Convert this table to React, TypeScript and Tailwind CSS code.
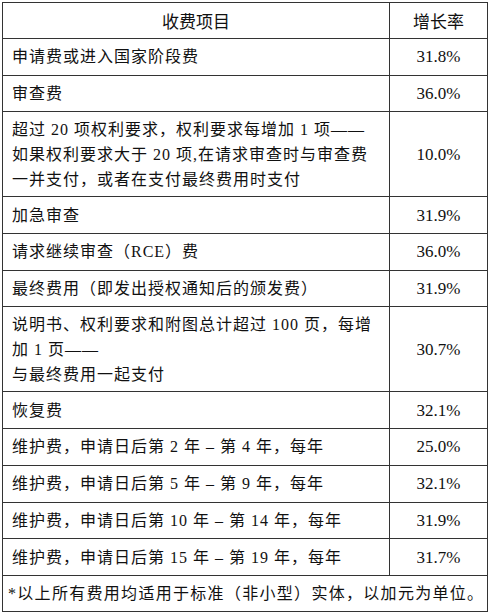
const rows: { item: React.ReactNode; rate: string; tall?: boolean }[] = [
  { item: '申请费或进入国家阶段费', rate: '31.8%' },
  { item: '审查费', rate: '36.0%' },
  {
    item: (
      <>
        超过 20 项权利要求，权利要求每增加 1 项——
        <br />
        如果权利要求大于 20 项,在请求审查时与审查费
        <br />
        一并支付，或者在支付最终费用时支付
      </>
    ),
    rate: '10.0%',
    tall: true,
  },
  { item: '加急审查', rate: '31.9%' },
  { item: '请求继续审查（RCE）费', rate: '36.0%' },
  { item: '最终费用（即发出授权通知后的颁发费）', rate: '31.9%' },
  {
    item: (
      <>
        说明书、权利要求和附图总计超过 100 页，每增
        <br />
        加 1 页——
        <br />
        与最终费用一起支付
      </>
    ),
    rate: '30.7%',
    tall: true,
  },
  { item: '恢复费', rate: '32.1%' },
  { item: '维护费，申请日后第 2 年 – 第 4 年，每年', rate: '25.0%' },
  { item: '维护费，申请日后第 5 年 – 第 9 年，每年', rate: '32.1%' },
  { item: '维护费，申请日后第 10 年 – 第 14 年，每年', rate: '31.9%' },
  { item: '维护费，申请日后第 15 年 – 第 19 年，每年', rate: '31.7%' },
];

const font = { fontFamily: '"Liberation Serif", "Noto Sans CJK SC", serif' };

export default function App() {
  return (
    <div className="min-h-[615px] w-[489px] bg-white pl-[2px] pt-[2px] text-[#111]" style={font}>
      <div className="w-[486px] border-l border-t border-[#333] text-[16px] leading-[25px]">
        {/* header */}
        <div className="grid h-[36px] grid-cols-[387px_98px] [font-family:'Noto_Sans_CJK_SC',sans-serif] text-[17px]">
          <div className="flex items-center justify-center border-b border-r border-[#333]">收费项目</div>
          <div className="flex items-center justify-center border-b border-r border-[#333]">增长率</div>
        </div>

        {rows.map((r, i) => (
          <div key={i} className={`grid grid-cols-[387px_98px] ${r.tall ? 'h-[85px]' : 'h-[36.7px]'}`}>
            <div className="flex items-center whitespace-nowrap border-b border-r border-[#333] pl-[9px] tracking-[1px]">
              <div>{r.item}</div>
            </div>
            <div className="flex items-center justify-center border-b border-r border-[#333] text-[17px]">
              {r.rate}
            </div>
          </div>
        ))}

        {/* footnote */}
        <div className="flex h-[36px] items-center whitespace-nowrap border-b border-r border-[#333] pl-[5px] tracking-[1.3px]">
          *以上所有费用均适用于标准（非小型）实体，以加元为单位。
        </div>
      </div>
    </div>
  );
}
